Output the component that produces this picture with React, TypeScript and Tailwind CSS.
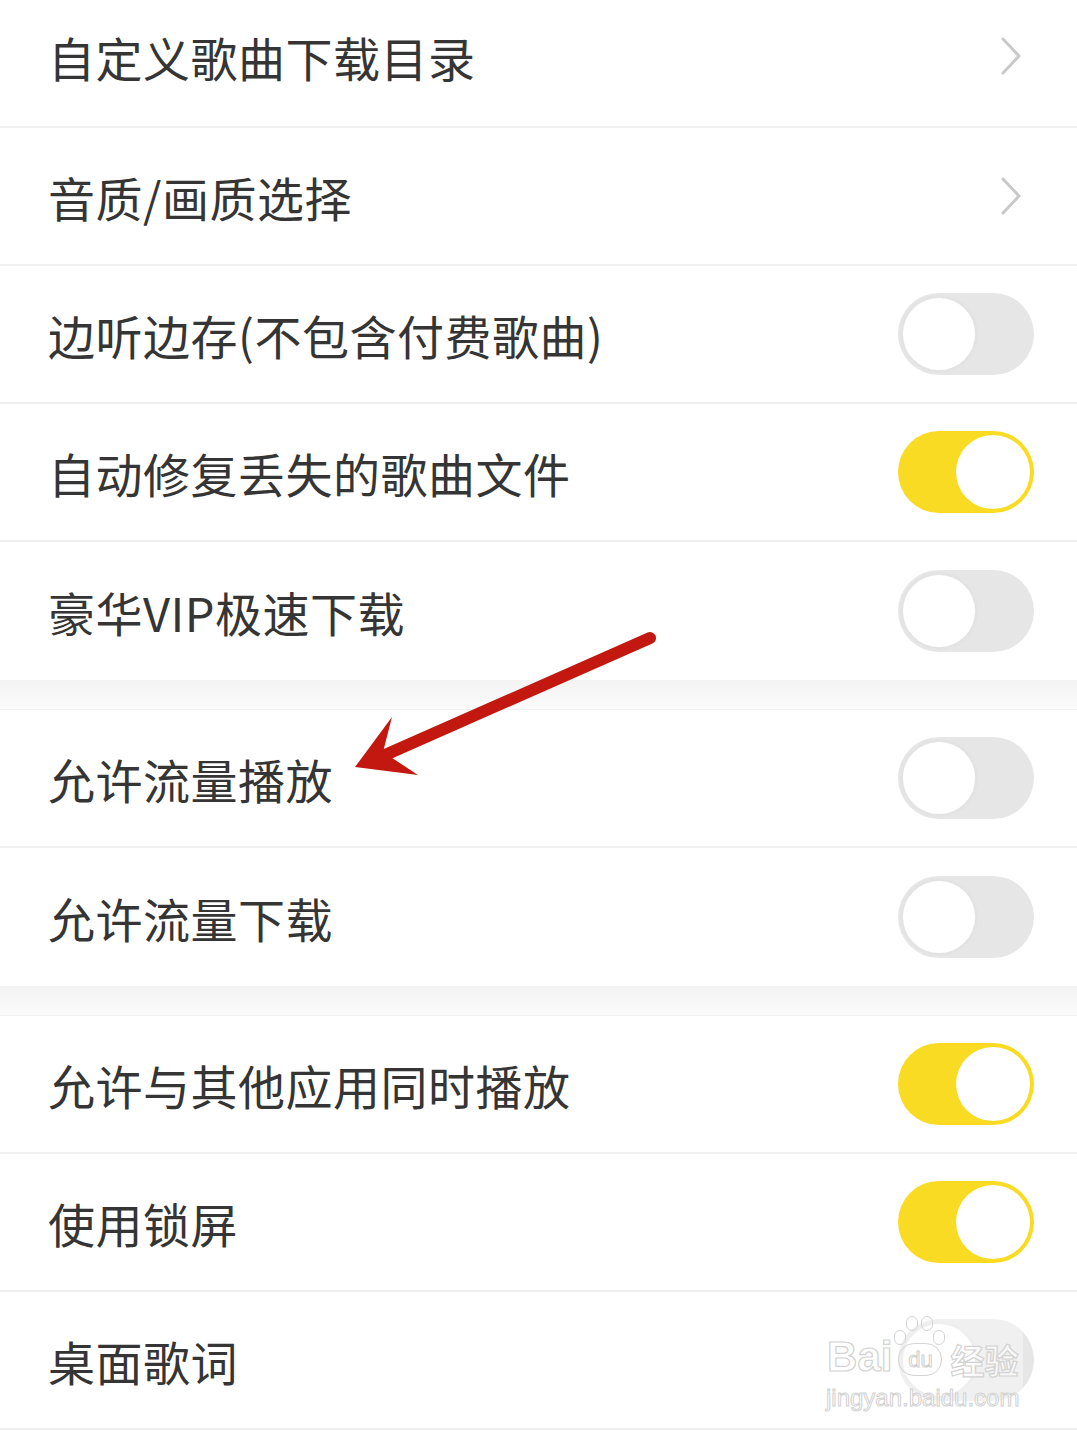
import React from 'react'

type Item = { label: string, kind: 'link' | 'on' | 'off', h?: string }

const groupA: Item[] = [
  { label: '自定义歌曲下载目录', kind: 'link', h: 'h-[128px] pb-[14px]' },
  { label: '音质/画质选择', kind: 'link' },
  { label: '边听边存(不包含付费歌曲)', kind: 'off' },
  { label: '自动修复丢失的歌曲文件', kind: 'on' },
  { label: '豪华VIP极速下载', kind: 'off' },
]
const groupB: Item[] = [
  { label: '允许流量播放', kind: 'off' },
  { label: '允许流量下载', kind: 'off' },
]
const groupC: Item[] = [
  { label: '允许与其他应用同时播放', kind: 'on' },
  { label: '使用锁屏', kind: 'on' },
  { label: '桌面歌词', kind: 'off' },
]

function Toggle({ on }: { on: boolean }) {
  if (on) {
    return <div className="w-[136px] h-[82px] rounded-full bg-[#fadb23] flex items-center justify-end pr-[4px]">
      <div className="w-[74px] h-[74px] rounded-full bg-white" />
    </div>
  }
  return <div className="w-[136px] h-[82px] rounded-full bg-[#e6e6e6] flex items-center pl-[2px]">
    <div className="w-[78px] h-[78px] rounded-full bg-white border-[3px] border-[#e3e3e3]" />
  </div>
}

function Chevron() {
  return <svg width="26" height="40" viewBox="0 0 26 40" className="mr-[10px]">
    <path d="M5 3 L21 20 L5 37" fill="none" stroke="#c9c9c9" strokeWidth="3" strokeLinecap="round" strokeLinejoin="round" />
  </svg>
}

function Row({ item, last }: { item: Item, last?: boolean }) {
  return <div className={`${item.h ?? 'h-[138px]'} flex items-center justify-between pl-[48px] pr-[43px] bg-white ${last ? '' : 'border-b-2 border-[#efefef]'}`}>
    <span className="text-[47px] leading-none text-[#353535] tracking-[0.5px]">{item.label}</span>
    {item.kind === 'link' ? <Chevron /> : <Toggle on={item.kind === 'on'} />}
  </div>
}

function Gap() {
  return <div className="h-[30px] bg-gradient-to-b from-[#f3f3f3] to-[#fbfbfb] border-b border-[#f0f0f0]" />
}

export default function App() {
  return <div className="relative w-[1077px] h-[1437px] overflow-hidden bg-white" style={{ fontFamily: '"Noto Sans CJK SC", "Noto Sans", sans-serif' }}>
    <div className="flex flex-col">
      {groupA.map((it, i) => <Row key={it.label} item={it} last={i === groupA.length - 1} />)}
      <Gap />
      {groupB.map((it, i) => <Row key={it.label} item={it} last={i === groupB.length - 1} />)}
      <Gap />
      {groupC.map(it => <Row key={it.label} item={it} />)}
    </div>

    {/* red annotation arrow */}
    <svg className="absolute left-0 top-0 pointer-events-none" width="1077" height="1437">
      <line x1="650" y1="638" x2="385" y2="755" stroke="#c2180f" strokeWidth="12" strokeLinecap="round" />
      <path d="M355 767 L392 717 L383 752 L418 775 Z" fill="#c2180f" />
    </svg>

    {/* watermark */}
    <div className="absolute left-[822px] top-[1316px] flex flex-col items-center pointer-events-none bg-white/40 rounded-[20px] px-[4px]">
      <div className="flex items-end">
        <span className="text-[42px] leading-none font-bold text-white/60 [-webkit-text-stroke:1.2px_#d2d2d2]" style={{ fontFamily: '"Liberation Sans", sans-serif' }}>Bai</span>
        <div className="relative w-[52px] h-[62px] mx-[2px]">
          <div className="absolute left-[12px] top-0 w-[12px] h-[15px] rounded-full border-[1.5px] border-[#d4d4d4]" />
          <div className="absolute left-[27px] top-0 w-[12px] h-[15px] rounded-full border-[1.5px] border-[#d4d4d4]" />
          <div className="absolute left-0 top-[14px] w-[12px] h-[15px] rounded-full border-[1.5px] border-[#d4d4d4]" />
          <div className="absolute left-[39px] top-[14px] w-[12px] h-[15px] rounded-full border-[1.5px] border-[#d4d4d4]" />
          <div className="absolute left-[4px] top-[27px] w-[44px] h-[33px] rounded-[16px] border-[1.5px] border-[#d4d4d4] flex items-center justify-center text-[22px] leading-none text-white/60 [-webkit-text-stroke:1px_#cfcfcf]" style={{ fontFamily: '"Liberation Sans", sans-serif' }}>du</div>
        </div>
        <span className="text-[34px] leading-none font-bold text-white/60 [-webkit-text-stroke:1.2px_#d2d2d2] ml-[2px] mb-[1px]">经验</span>
      </div>
      <span className="text-[24px] leading-none mt-[8px] mb-[2px] text-white/60 [-webkit-text-stroke:1px_#d2d2d2]" style={{ fontFamily: '"Liberation Sans", sans-serif' }}>jingyan.baidu.com</span>
    </div>
  </div>
}
